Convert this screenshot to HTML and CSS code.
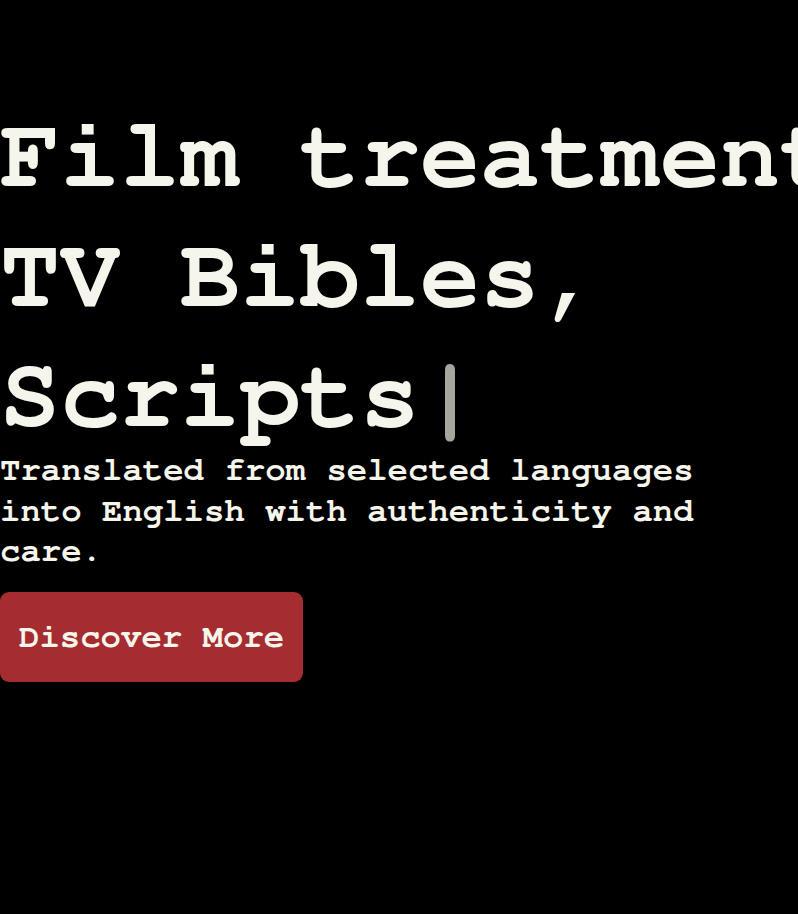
FILE: index.html
```html
<!DOCTYPE html>
<html lang="en">
<head>
<meta charset="utf-8">
<title>Film treatments, TV Bibles, Scripts</title>
<link rel="stylesheet" href="styles.css">
</head>
<body>
<main class="hero">
  <h1 class="hero-title"><span class="line">Film treatments,</span><span class="line">TV Bibles,</span><span class="line">Scripts<span class="cursor">|</span></span></h1>
  <p class="hero-sub">Translated from selected languages into English with authenticity and care.</p>
  <a class="hero-btn" href="#more">Discover More</a>
</main>
</body>
</html>
```
FILE: styles.css
```css
html, body {
  margin: 0;
  padding: 0;
  background: #000;
  overflow: hidden;
}
body {
  font-family: "FreeMono", "Courier New", monospace;
  font-weight: bold;
  color: #f5f5eb;
}
.hero {
  display: flex;
  flex-direction: column;
  align-items: flex-start;
  padding-top: 96px;
}
.hero-title {
  margin: 0;
  font-size: 100px;
  line-height: 120px;
  font-weight: bold;
}
.line {
  display: block;
  white-space: nowrap;
}
.cursor {
  opacity: 0.68;
}
.hero-sub {
  margin: -6px 0 0;
  max-width: 720px;
  font-size: 34px;
  line-height: 40.5px;
}
.hero-btn {
  margin-top: 20px;
  display: inline-block;
  padding: 24px 19px 23px;
  font-size: 34px;
  line-height: 43px;
  background: #a52c30;
  color: #f5f5eb;
  border-radius: 9px;
  text-decoration: none;
}
```
